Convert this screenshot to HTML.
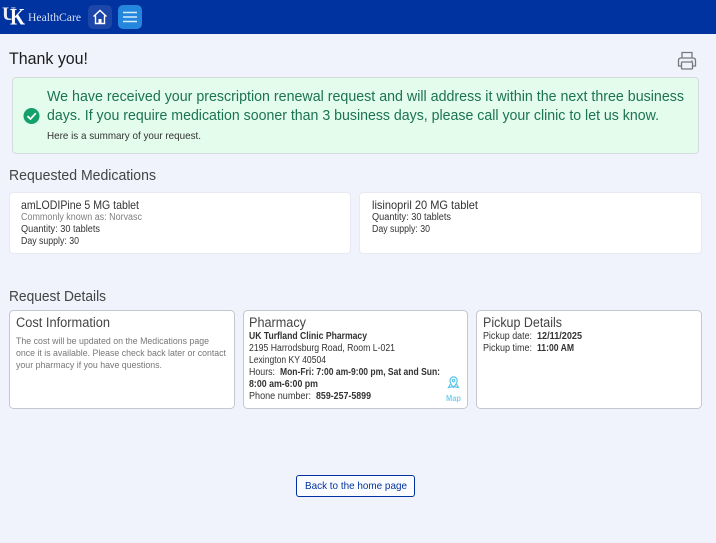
<!DOCTYPE html>
<html lang="en"><head><meta charset="utf-8"><title>Thank you</title>
<style>
html,body{margin:0;padding:0;width:716px;height:543px;overflow:hidden;background:#f0f3fb}
svg{display:block}
text{font-family:"Liberation Sans",sans-serif;white-space:pre}
</style></head><body>
<svg width="716" height="543" viewBox="0 0 716 543" xmlns="http://www.w3.org/2000/svg">
<rect width="716" height="543" fill="#f0f3fb"/>
<rect width="716" height="34" fill="#0033a0"/>
<text x="2" y="20" font-size="19" font-weight="700" fill="#e8edf9" textLength="14" lengthAdjust="spacingAndGlyphs" style="font-family:'Liberation Serif',serif">U</text>
<text x="10" y="24.500" font-size="23" font-weight="700" fill="#fff" stroke="#0033a0" stroke-width="1" paint-order="stroke" textLength="15" lengthAdjust="spacingAndGlyphs" style="font-family:'Liberation Serif',serif">K</text>
<text x="28" y="21" font-size="12" fill="#d5ddf2" textLength="53" lengthAdjust="spacingAndGlyphs" style="font-family:'Liberation Serif',serif">HealthCare</text>
<rect x="88" y="5" width="24" height="24" rx="5" fill="#1c46a8"/>
<path d="M93.500 16.500L100 10.500L106.500 16.500M95.500 15.500V23.500H104.500V15.500" fill="none" stroke="#fff" stroke-width="1.400"/>
<rect x="98.500" y="19" width="3" height="4.500" fill="#fff"/>
<rect x="118" y="5" width="24" height="24" rx="5" fill="#2487dd"/>
<path d="M123 12.500H137M123 17H137M123 21.500H137" stroke="#d6ecfb" stroke-width="1.400"/>

<text x="9" y="64" font-size="17" fill="#1c1c1c" textLength="79" lengthAdjust="spacingAndGlyphs">Thank you!</text>
<g fill="none" stroke="#77777f" stroke-width="1.300"><path d="M682 58V52.500H692V58"/><path d="M681 66H678.500V60.500Q678.500 58 681 58H693Q695.500 58 695.500 60.500V66H693"/><rect x="681.500" y="62" width="11" height="7" rx="1"/></g>
<circle cx="692" cy="61" r=".7" fill="#77777f"/>

<rect x="12.500" y="77.500" width="686" height="76" rx="3.500" fill="#e3fceb" stroke="#d5dcdc"/>
<circle cx="31.500" cy="116" r="8" fill="#14a06a"/>
<path d="M27.500 116.200L30.500 119L35.800 113.200" fill="none" stroke="#fff" stroke-width="1.800"/>
<text x="47" y="101" font-size="15" fill="#1c7350" textLength="637" lengthAdjust="spacingAndGlyphs">We have received your prescription renewal request and will address it within the next three business</text>
<text x="47" y="120" font-size="15" fill="#1c7350" textLength="612" lengthAdjust="spacingAndGlyphs">days. If you require medication sooner than 3 business days, please call your clinic to let us know.</text>
<text x="47" y="139" font-size="10.500" fill="#333" textLength="154" lengthAdjust="spacingAndGlyphs">Here is a summary of your request.</text>

<text x="9" y="180" font-size="14.500" fill="#444" textLength="147" lengthAdjust="spacingAndGlyphs">Requested Medications</text>
<rect x="9.500" y="192.500" width="341" height="61" rx="3.500" fill="#fff" stroke="#e6e9f1"/>
<rect x="359.500" y="192.500" width="342" height="61" rx="3.500" fill="#fff" stroke="#e6e9f1"/>
<text x="21" y="209" font-size="12" fill="#333" textLength="118" lengthAdjust="spacingAndGlyphs">amLODIPine 5 MG tablet</text>
<text x="21" y="220" font-size="10" fill="#808080" textLength="121" lengthAdjust="spacingAndGlyphs">Commonly known as: Norvasc</text>
<text x="21" y="232" font-size="10" fill="#333" textLength="79" lengthAdjust="spacingAndGlyphs">Quantity: 30 tablets</text>
<text x="21" y="244" font-size="10" fill="#333" textLength="58" lengthAdjust="spacingAndGlyphs">Day supply: 30</text>
<text x="372" y="209" font-size="12" fill="#333" textLength="106" lengthAdjust="spacingAndGlyphs">lisinopril 20 MG tablet</text>
<text x="372" y="220" font-size="10" fill="#333" textLength="79" lengthAdjust="spacingAndGlyphs">Quantity: 30 tablets</text>
<text x="372" y="232" font-size="10" fill="#333" textLength="58" lengthAdjust="spacingAndGlyphs">Day supply: 30</text>

<text x="9" y="301" font-size="14.500" fill="#444" textLength="97" lengthAdjust="spacingAndGlyphs">Request Details</text>
<rect x="9.500" y="310.500" width="225" height="98" rx="4" fill="#fff" stroke="#c4c7cd"/>
<rect x="243.500" y="310.500" width="224" height="98" rx="4" fill="#fff" stroke="#c4c7cd"/>
<rect x="476.500" y="310.500" width="225" height="98" rx="4" fill="#fff" stroke="#c4c7cd"/>

<text x="16" y="327" font-size="13.500" fill="#444" textLength="94" lengthAdjust="spacingAndGlyphs">Cost Information</text>
<text x="16" y="344" font-size="9" fill="#777" textLength="193" lengthAdjust="spacingAndGlyphs">The cost will be updated on the Medications page</text>
<text x="16" y="356" font-size="9" fill="#777" textLength="210" lengthAdjust="spacingAndGlyphs">once it is available. Please check back later or contact</text>
<text x="16" y="368" font-size="9" fill="#777" textLength="146" lengthAdjust="spacingAndGlyphs">your pharmacy if you have questions.</text>

<text x="249" y="327" font-size="13.500" fill="#444" textLength="57" lengthAdjust="spacingAndGlyphs">Pharmacy</text>
<text x="249" y="339" font-size="10" font-weight="700" fill="#333" textLength="118" lengthAdjust="spacingAndGlyphs">UK Turfland Clinic Pharmacy</text>
<text x="249" y="351" font-size="10" fill="#333" textLength="146" lengthAdjust="spacingAndGlyphs">2195 Harrodsburg Road, Room L-021</text>
<text x="249" y="363" font-size="10" fill="#333" textLength="77" lengthAdjust="spacingAndGlyphs">Lexington KY 40504</text>
<text x="249" y="375" font-size="10" fill="#333" textLength="26" lengthAdjust="spacingAndGlyphs">Hours:</text>
<text x="280" y="375" font-size="10" font-weight="700" fill="#333" textLength="160" lengthAdjust="spacingAndGlyphs">Mon-Fri: 7:00 am-9:00 pm, Sat and Sun:</text>
<text x="249" y="387" font-size="10" font-weight="700" fill="#333" textLength="69" lengthAdjust="spacingAndGlyphs">8:00 am-6:00 pm</text>
<text x="249" y="399" font-size="10" fill="#333" textLength="62" lengthAdjust="spacingAndGlyphs">Phone number:</text>
<text x="316" y="399" font-size="10" font-weight="700" fill="#333" textLength="55" lengthAdjust="spacingAndGlyphs">859-257-5899</text>
<g fill="none" stroke="#5cc4ea" stroke-width="1.200"><path d="M453.500 387.500C451 384.500 450 382.500 450 380.500A3.600 3.600 0 0 1 457.200 380.500C457.200 382.500 456 384.500 453.500 387.500Z"/><circle cx="453.600" cy="380.500" r="1.200"/><path d="M450.500 384L448.500 387.500L453.500 386.500L458.500 387.500L456.500 384"/></g>
<text x="446" y="401" font-size="8" font-weight="700" fill="#7cd0ee" textLength="15" lengthAdjust="spacingAndGlyphs">Map</text>

<text x="483" y="327" font-size="13.500" fill="#444" textLength="79" lengthAdjust="spacingAndGlyphs">Pickup Details</text>
<text x="483" y="339" font-size="10" fill="#333" textLength="49" lengthAdjust="spacingAndGlyphs">Pickup date:</text>
<text x="537" y="339" font-size="10" font-weight="700" fill="#333" textLength="45" lengthAdjust="spacingAndGlyphs">12/11/2025</text>
<text x="483" y="351" font-size="10" fill="#333" textLength="49" lengthAdjust="spacingAndGlyphs">Pickup time:</text>
<text x="537" y="351" font-size="10" font-weight="700" fill="#333" textLength="37" lengthAdjust="spacingAndGlyphs">11:00 AM</text>

<rect x="296.500" y="475.500" width="118" height="21" rx="2.500" fill="#fbfcff" stroke="#0033a0" stroke-width="1"/>
<text x="305" y="489" font-size="10.500" fill="#0033a0" textLength="102" lengthAdjust="spacingAndGlyphs">Back to the home page</text>
</svg>
</body></html>
